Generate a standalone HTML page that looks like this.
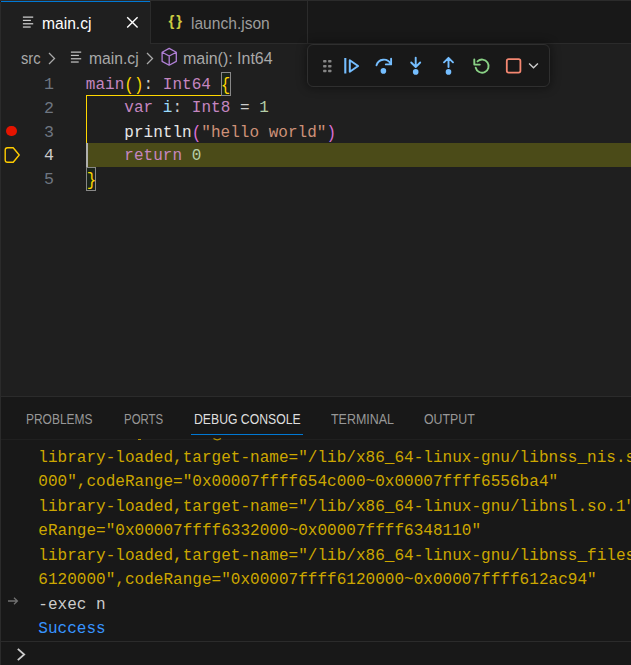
<!DOCTYPE html>
<html>
<head>
<meta charset="utf-8">
<style>
*{box-sizing:border-box;margin:0;padding:0}
html,body{width:631px;height:665px;overflow:hidden;background:#1f1f1f}
body{position:relative;font-family:"Liberation Sans",sans-serif;color:#ccc}
.abs{position:absolute}
.sans{font-family:"Liberation Sans",sans-serif;white-space:pre;transform-origin:0 50%}
.mono{font-family:"Liberation Mono",monospace;white-space:pre}
/* tabs */
#tabbar{left:0;top:0;width:631px;height:44px;background:#181818;border-bottom:1px solid #2b2b2b}
#tab1{left:1px;top:0;width:150px;height:44px;background:#1f1f1f;border-right:1px solid #2b2b2b}
#tab1top{left:1px;top:1px;width:149px;height:1px;background:#0078d4}
#tab2{left:151px;top:0;width:157px;height:43px;border-right:1px solid #2b2b2b}
.tablabel{font-size:16.3px;line-height:20px;top:13px}
#leftedge{left:0;top:2px;width:1px;height:663px;background:#2b2b2b}
/* breadcrumb */
.bc{font-size:16.3px;line-height:20px;top:48px;color:#a9a9a9}
/* editor */
.ln{font-size:16.6px;line-height:24px;width:30px;text-align:right;left:24px;color:#6e7681;margin-top:1px}
.code{font-size:16px;line-height:24px;left:85.8px;letter-spacing:0.025px;margin-top:0.8px}
.br{display:inline-block;transform:translateY(0.7px) scaleY(1.11)}.kw{color:#c586c0}.fn{color:#c586c0}.ty{color:#c586c0}
/* panel */
#panel{left:1px;top:396px;width:630px;height:269px;background:#181818;border-top:1px solid #2b2b2b}
.ptab{font-size:14px;line-height:16px;top:411.3px;color:#979797}
.con{font-size:16px;line-height:24.5px;margin-top:1.8px;color:#cca700;letter-spacing:0.025px}
</style>
</head>
<body>
<div id="tabbar" class="abs"></div>
<div id="tab1" class="abs"></div>
<div id="tab1top" class="abs"></div>
<div id="tab2" class="abs"></div>
<div id="leftedge" class="abs"></div>
<div class="abs" style="left:0;top:0;width:631px;height:1px;background:#2b2b2b"></div>

<!-- tab 1 content -->
<svg class="abs" style="left:22px;top:15px" width="13" height="14" viewBox="0 0 13 14">
 <g fill="#d0d0d0">
  <rect x="0.9" y="1.500" width="10.300" height="1.250"/><rect x="0.9" y="4.800" width="8" height="1.250"/><rect x="0.9" y="8.150" width="10.300" height="1.250"/><rect x="0.9" y="11.400" width="7.800" height="1.250"/>
 </g>
</svg>
<div class="abs sans tablabel" style="left:41.6px;color:#ffffff;transform:scaleX(0.958)">main.cj</div>
<svg class="abs" style="left:126px;top:16px" width="13" height="13" viewBox="0 0 13 13">
 <path d="M1.2 1.2L11.6 11.6M11.6 1.2L1.2 11.6" stroke="#ffffff" stroke-width="1.4" fill="none"/>
</svg>
<!-- tab 2 content -->
<div class="abs sans" style="left:168.5px;top:11px;font-size:15px;line-height:20px;color:#cbcb41;font-weight:bold;letter-spacing:2px">{}</div>
<div class="abs sans tablabel" style="left:191px;color:#9d9d9d;transform:scaleX(0.9563)">launch.json</div>

<!-- breadcrumb -->
<div class="abs sans bc" style="left:21.4px;transform:scaleX(0.9032)">src</div>
<svg class="abs" style="left:48px;top:52px" width="8" height="13" viewBox="0 0 8 13"><path d="M1 1L6.5 6.5L1 12" stroke="#a9a9a9" stroke-width="1.3" fill="none"/></svg>
<svg class="abs" style="left:69.500px;top:50.400px" width="13" height="14" viewBox="0 0 13 14">
 <g fill="#c0c0c0">
  <rect x="0.9" y="1.500" width="10.300" height="1.250"/><rect x="0.9" y="4.800" width="8" height="1.250"/><rect x="0.9" y="8.150" width="10.300" height="1.250"/><rect x="0.9" y="11.400" width="7.800" height="1.250"/>
 </g>
</svg>
<div class="abs sans bc" style="left:89.2px;transform:scaleX(0.962)">main.cj</div>
<svg class="abs" style="left:146px;top:52px" width="8" height="13" viewBox="0 0 8 13"><path d="M1 1L6.5 6.5L1 12" stroke="#a9a9a9" stroke-width="1.3" fill="none"/></svg>
<svg class="abs" style="left:160px;top:47px" width="19" height="20" viewBox="0 0 19 20">
 <path d="M9.200 1.400L16.300 5.200V14.400L9.200 18.200L2.100 14.400V5.200Z M2.100 5.200L9.200 9L16.300 5.200 M9.200 9V18.200" stroke="#b180d7" stroke-width="1.300" fill="none" stroke-linejoin="round"/>
</svg>
<div class="abs sans bc" style="left:182.9px;transform:scaleX(0.9808)">main(): Int64</div>

<!-- editor -->
<div class="abs" style="left:86px;top:143px;width:545px;height:24px;background:#4b4b18"></div>
<div class="abs" style="left:86px;top:95px;width:135px;height:1px;background:#ffd700"></div>
<div class="abs" style="left:86px;top:95px;width:1px;height:48px;background:#ffd700"></div>
<div class="abs" style="left:86px;top:143px;width:2px;height:24px;background:#aeafad"></div>
<div class="abs" style="left:221px;top:72px;width:10px;height:24px;border:1px solid #888;background:rgba(0,100,0,0.1)"></div>
<div class="abs" style="left:86px;top:167px;width:10px;height:24px;border:1px solid #888;background:rgba(0,100,0,0.1)"></div>

<div class="abs mono ln" style="top:71.75px">1</div>
<div class="abs mono ln" style="top:95.5px">2</div>
<div class="abs mono ln" style="top:119.75px">3</div>
<div class="abs mono ln" style="top:142.750px;color:#cccccc">4</div>
<div class="abs mono ln" style="top:166.75px">5</div>

<div class="abs mono code" style="top:71.75px"><span style="color:#c586c0">main</span><span class="br" style="color:#ffd700">()</span><span style="color:#cccccc">: </span><span style="color:#c586c0">Int64</span> <span class="br" style="color:#ffd700">{</span></div>
<div class="abs mono code" style="top:95.5px">    <span style="color:#c586c0">var</span> <span style="color:#9cdcfe">i</span><span style="color:#cccccc">: </span><span style="color:#c586c0">Int8</span><span style="color:#cccccc"> = </span><span style="color:#b5cea8">1</span></div>
<div class="abs mono code" style="top:119.75px">    <span style="color:#e6e6e6">println</span><span class="br" style="color:#da70d6">(</span><span style="color:#ce9178">"hello world"</span><span class="br" style="color:#da70d6">)</span></div>
<div class="abs mono code" style="top:142.750px">    <span style="color:#c586c0">return</span> <span style="color:#b5cea8">0</span></div>
<div class="abs mono code" style="top:166.75px"><span class="br" style="color:#ffd700;transform:translate(0.9px,0.7px) scaleY(1.11)">}</span></div>

<!-- breakpoint glyphs -->
<div class="abs" style="left:6px;top:125.6px;width:10.6px;height:10.6px;border-radius:50%;background:#e51400"></div>
<svg class="abs" style="left:3px;top:145px" width="20" height="20" viewBox="0 0 20 20">
 <path d="M4.5 2.7H10.2L16.2 9.95L10.2 17.2H4.5Q2.2 17.2 2.2 14.9V5Q2.2 2.7 4.5 2.7Z" stroke="#ffcc00" stroke-width="1.4" fill="none" stroke-linejoin="round"/>
</svg>

<!-- debug toolbar -->
<div class="abs" style="left:307px;top:44px;width:243px;height:43px;background:#181818;border:1px solid #2f2f2f;border-radius:6px;box-shadow:0 0 8px 2px rgba(0,0,0,0.36)"></div>
<svg class="abs" style="left:307px;top:44px" width="243" height="43" viewBox="0 0 243 43">
 <!-- grip -->
 <g fill="#858585">
  <rect x="16.100" y="16" width="3.400" height="2.500" rx="0.700"/><rect x="21.100" y="16" width="3.400" height="2.500" rx="0.700"/>
  <rect x="16.100" y="20.900" width="3.400" height="2.500" rx="0.700"/><rect x="21.100" y="20.900" width="3.400" height="2.500" rx="0.700"/>
  <rect x="16.100" y="25.800" width="3.400" height="2.500" rx="0.700"/><rect x="21.100" y="25.800" width="3.400" height="2.500" rx="0.700"/>
 </g>
 <!-- continue -->
 <g stroke="#75beff" fill="none" stroke-linejoin="round">
  <path d="M38.300 14V29.500" stroke-width="2.100"/>
  <path d="M42.800 16.200L51.100 21.950L42.800 27.700Z" stroke-width="2"/>
 </g>
 <!-- step over -->
 <g stroke="#75beff" stroke-width="1.900" fill="none" stroke-linecap="round" stroke-linejoin="round">
  <path d="M69.500 21.300A7.600 7.600 0 0 1 83.600 19.800"/>
  <path d="M84.100 14.800V20.400H78.800"/>
 </g>
 <circle cx="76.400" cy="26.900" r="2.800" fill="#75beff"/>
 <!-- step into -->
 <g stroke="#75beff" stroke-width="1.900" fill="none" stroke-linecap="round" stroke-linejoin="round">
  <path d="M108.700 13.600V22.800M104.200 18.500L108.700 23L113.200 18.500"/>
 </g>
 <circle cx="108.700" cy="27.900" r="2.800" fill="#75beff"/>
 <!-- step out -->
 <g stroke="#75beff" stroke-width="1.900" fill="none" stroke-linecap="round" stroke-linejoin="round">
  <path d="M141.500 23V14M137 18.300L141.500 13.800L146 18.300"/>
 </g>
 <circle cx="141.500" cy="27.900" r="2.800" fill="#75beff"/>
 <!-- restart -->
 <g stroke="#89d185" stroke-width="1.900" fill="none" stroke-linecap="round" stroke-linejoin="round">
  <path d="M170.500 17.400A6.550 6.550 0 1 1 168.700 23.700"/>
  <path d="M167.300 15.400V20.600H172.800"/>
 </g>
 <!-- stop -->
 <rect x="199.800" y="15.100" width="13.600" height="13.500" rx="1.800" stroke="#f48771" stroke-width="1.800" fill="none"/>
 <!-- chevron -->
 <path d="M222.100 19.400L226.500 23.800L230.900 19.400" stroke="#cccccc" stroke-width="1.400" fill="none"/>
</svg>

<!-- panel -->
<div id="panel" class="abs"></div>
<div class="abs sans ptab" style="left:25.9px;transform:scaleX(0.8546)">PROBLEMS</div>
<div class="abs sans ptab" style="left:123.6px;transform:scaleX(0.8170)">PORTS</div>
<div class="abs sans ptab" style="left:193.5px;color:#dedede;transform:scaleX(0.8731)">DEBUG CONSOLE</div>
<div class="abs sans ptab" style="left:330.6px;transform:scaleX(0.8892)">TERMINAL</div>
<div class="abs sans ptab" style="left:424.4px;transform:scaleX(0.8814)">OUTPUT</div>
<div class="abs" style="left:191px;top:433.6px;width:111.7px;height:1.2px;background:#0078d4"></div>
<div class="abs" style="left:1px;top:439px;width:630px;height:1px;background:#202020"></div>

<div class="abs" style="left:1px;top:440px;width:630px;height:201px;overflow:hidden">
<div class="abs mono con" style="left:37.3px;top:-20.500px">library-loaded,target-name="/lib/x86_64-linux-gnu/libnss_compat.so.2",ranges=</div>
<div class="abs mono con" style="left:37.3px;top:4px">library-loaded,target-name="/lib/x86_64-linux-gnu/libnss_nis.so.2",range</div>
<div class="abs mono con" style="left:37.3px;top:28.500px">000",codeRange="0x00007ffff654c000~0x00007ffff6556ba4"</div>
<div class="abs mono con" style="left:37.3px;top:53px">library-loaded,target-name="/lib/x86_64-linux-gnu/libnsl.so.1",ranges=</div>
<div class="abs mono con" style="left:37.3px;top:77.500px">eRange="0x00007ffff6332000~0x00007ffff6348110"</div>
<div class="abs mono con" style="left:37.3px;top:102px">library-loaded,target-name="/lib/x86_64-linux-gnu/libnss_files.so.2"</div>
<div class="abs mono con" style="left:37.3px;top:126.500px">6120000",codeRange="0x00007ffff6120000~0x00007ffff612ac94"</div>
<div class="abs mono con" style="left:37.3px;top:151px;color:#cccccc">-exec n</div>
<div class="abs mono con" style="left:37.3px;top:175.500px;color:#3794ff">Success</div>
</div>
<div class="abs" style="left:137.5px;top:439px;width:3px;height:1px;background:#cca700;opacity:.85"></div>
<svg class="abs" style="left:212px;top:436px" width="11" height="6" viewBox="0 0 11 6"><path d="M1.500 2.600Q5.200 5 9 2.600" stroke="#cca700" stroke-width="1.200" fill="none" opacity=".85"/></svg>
<svg class="abs" style="left:7px;top:596px" width="12" height="10" viewBox="0 0 12 10"><path d="M1 5H10.400M7 1.800L10.400 5L7 8.200" stroke="#717171" stroke-width="1.300" fill="none"/></svg>
<div class="abs" style="left:1px;top:641px;width:630px;height:1px;background:#2b2b2b"></div>
<svg class="abs" style="left:16px;top:647px" width="11" height="15" viewBox="0 0 11 15"><path d="M1.800 1.800L8.200 7.500L1.800 13.200" stroke="#cccccc" stroke-width="1.800" fill="none"/></svg>
</body>
</html>
